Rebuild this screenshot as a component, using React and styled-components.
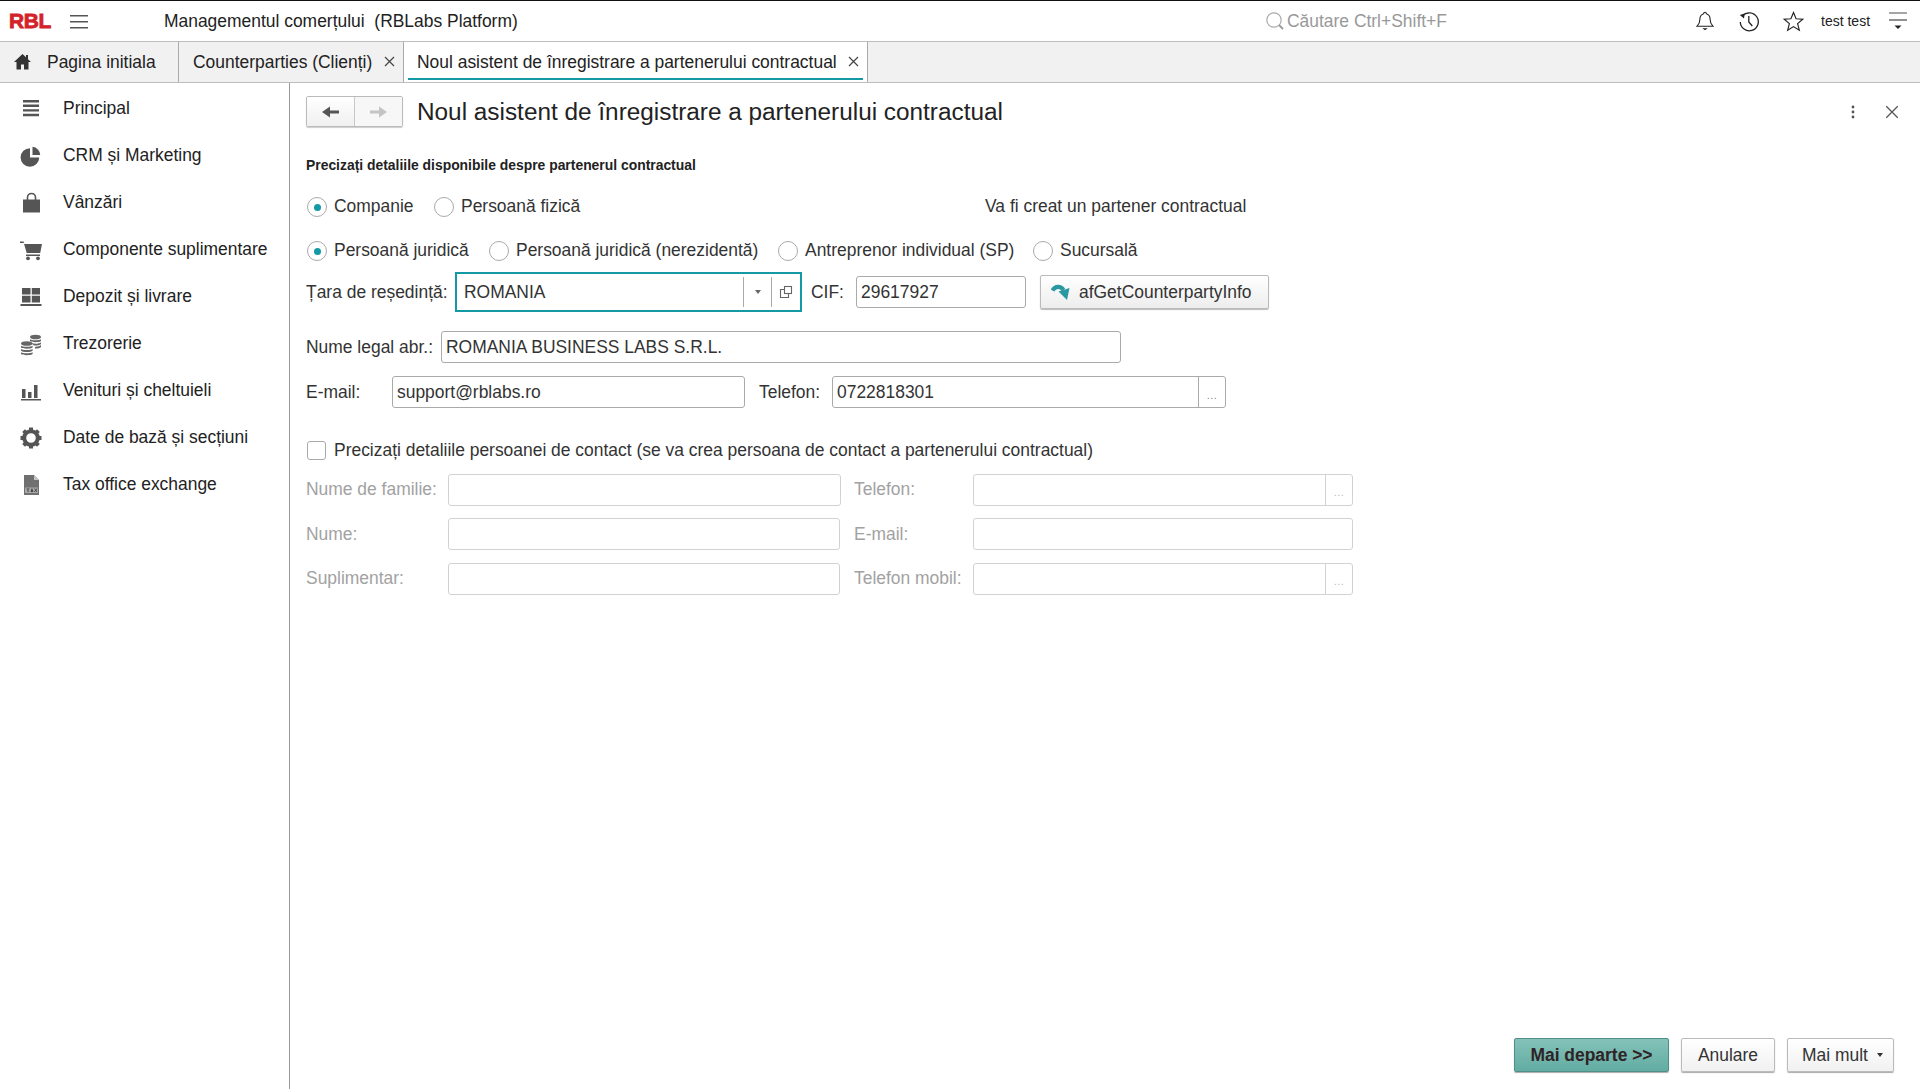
import React from "react"
import styled, { createGlobalStyle } from "styled-components"

const GlobalStyle = createGlobalStyle`
  html, body { margin: 0; padding: 0; height: 100%; background: #fff; }
  body {
    font-family: "Liberation Sans", Arial, sans-serif;
    font-size: 17.45px;
    color: #333;
  }
  * { box-sizing: border-box; }
`

const Page = styled.div`
  width: 1920px;
  height: 1089px;
  display: flex;
  flex-direction: column;
  overflow: hidden;
  border-top: 1px solid #111;
`

// Top bar
const TopBar = styled.header`
  height: 40px;
  flex: none;
  display: flex;
  align-items: center;
  position: relative;
`

const Logo = styled.div`
  width: 70px;
  padding-left: 9px;
  font-size: 21px;
  font-weight: 700;
  letter-spacing: -0.4px;
  color: #d3222a;
  -webkit-text-stroke: 0.8px #d3222a;
`

const Burger = styled.div`
  width: 94px;
  display: flex;
  flex-direction: column;
  gap: 5px;
  span {
    display: block;
    width: 18px;
    height: 1px;
    background: #555;
    box-shadow: 0 1px 0 #aaa;
  }
`

const AppTitle = styled.div`
  white-space: pre;
  color: #222;
`

const Search = styled.div`
  margin-left: auto;
  width: 418px;
  display: flex;
  align-items: center;
  gap: 2px;
  color: #999;
`

const TopIcons = styled.div`
  width: 237px;
  display: flex;
  align-items: center;
  color: #222;
`

const TopIcon = styled.div`
  width: 44px;
  flex: none;
  display: flex;
  justify-content: center;
`

const UserName = styled.div`
  font-size: 14px;
  width: 55px;
  margin-left: 6px;
  white-space: nowrap;
`

// Tabs
const TabBar = styled.nav`
  height: 42px;
  flex: none;
  display: flex;
  background: #f1f1f1;
  border-top: 1px solid #bdbdbd;
  border-bottom: 1px solid #bdbdbd;
`

const Tab = styled.div`
  width: ${p => p.$w}px;
  flex: none;
  display: flex;
  align-items: center;
  position: relative;
  padding-left: ${p => p.$pad}px;
  border-right: 1px solid #aaa;
  color: #222;
  background: ${p => (p.$active ? "#fff" : "transparent")};
  white-space: nowrap;
`

const TabUnderline = styled.div`
  position: absolute;
  left: 4px;
  right: 4px;
  bottom: 2px;
  height: 2px;
  background: #159aa5;
`

const TabClose = styled.span`
  position: absolute;
  right: 8px;
  top: 14px;
  display: flex;
  color: #444;
`

const TabHomeSlot = styled.span`
  position: absolute;
  left: 13px;
  top: 10px;
  display: flex;
  color: #333;
`

const Body = styled.div`
  flex: 1;
  display: flex;
  min-height: 0;
`

// Sidebar
const Sidebar = styled.aside`
  width: 290px;
  flex: none;
  border-right: 1px solid #999;
  padding-top: 2px;
`

const MenuItem = styled.div`
  height: 47px;
  display: flex;
  align-items: center;
  color: #222;
`

const MenuIcon = styled.div`
  width: 63px;
  padding-left: 19px;
  flex: none;
  display: flex;
  color: #555;
`

// Main content
const Main = styled.main`
  flex: 1;
  min-width: 0;
  display: flex;
  flex-direction: column;
  padding: 13px 0 0 16px;
`

const TitleRow = styled.div`
  display: flex;
  align-items: center;
  height: 31px;
  padding-right: 8px;
`

const NavGroup = styled.div`
  display: flex;
  width: 97px;
  height: 31px;
  margin-right: 14px;
  border: 1px solid #bbb;
  border-radius: 2px;
  box-shadow: 0 1px 1px #ccc;
`

const NavButton = styled.div`
  flex: 1;
  display: flex;
  align-items: center;
  justify-content: center;
  background: ${p => (p.$off ? "#f7f7f7" : "linear-gradient(#fff, #f0f0f0)")};
  color: ${p => (p.$off ? "#c4c4c4" : "#555")};
  & + & { border-left: 1px solid #c8c8c8; }
`

const Title = styled.h1`
  margin: 0;
  flex: 1;
  font-size: 24.35px;
  font-weight: 400;
  color: #222;
  white-space: nowrap;
`

const TitleAction = styled.div`
  width: ${p => p.$w}px;
  flex: none;
  display: flex;
  justify-content: center;
  color: #555;
`

const SectionHead = styled.div`
  margin-top: 30px;
  height: 16px;
  line-height: 16px;
  font-size: 13.9px;
  font-weight: 700;
  color: #222;
`

const Row = styled.div`
  display: flex;
  align-items: center;
  height: ${p => p.$h}px;
  margin-top: ${p => p.$mt || 0}px;
`

const RadioOption = styled.div`
  width: ${p => p.$w}px;
  flex: none;
  display: flex;
  align-items: center;
  gap: 7px;
  padding-left: 1px;
  white-space: nowrap;
  color: #333;
`

const RadioMark = styled.span`
  width: 20px;
  height: 20px;
  flex: none;
  margin-top: 2px;
  border: 1px solid #aaa;
  border-radius: 50%;
  background: #fff;
  display: flex;
  align-items: center;
  justify-content: center;
  &::after {
    content: "";
    width: 7px;
    height: 7px;
    border-radius: 50%;
    background: ${p => (p.$on ? "#159aa5" : "transparent")};
  }
`

const Note = styled.div`
  margin-left: ${p => p.$ml}px;
  color: #333;
  white-space: nowrap;
`

const Label = styled.label`
  width: ${p => p.$w}px;
  margin-left: ${p => p.$ml || 0}px;
  flex: none;
  white-space: nowrap;
  color: ${p => (p.$dim ? "#a2a2a2" : "#333")};
`

const Input = styled.div`
  width: ${p => p.$w}px;
  height: 32px;
  flex: none;
  display: flex;
  align-items: center;
  padding-left: 4px;
  border: 1px solid ${p => (p.$dim ? "#d2d2d2" : "#aaa")};
  border-radius: 3px;
  background: #fff;
  color: #333;
  white-space: nowrap;
`

const InputWrap = styled.div`
  width: ${p => p.$w}px;
  height: 32px;
  flex: none;
  display: flex;
  border: 1px solid ${p => (p.$dim ? "#d2d2d2" : "#aaa")};
  border-radius: 3px;
  background: #fff;
`

const InputText = styled.div`
  flex: 1;
  display: flex;
  align-items: center;
  padding-left: 4px;
`

const Dots = styled.div`
  width: 27px;
  flex: none;
  display: flex;
  align-items: center;
  justify-content: center;
  padding-top: 5px;
  font-size: 11px;
  letter-spacing: 0.5px;
  border-left: 1px solid ${p => (p.$dim ? "#d2d2d2" : "#aaa")};
  color: ${p => (p.$dim ? "#bbb" : "#888")};
`

const Select = styled.div`
  width: 347px;
  height: 40px;
  flex: none;
  display: flex;
  align-items: center;
  border: 2px solid #159aa5;
  padding-left: 7px;
  color: #333;
`

const SelectValue = styled.div`
  flex: 1;
`

const SelectPart = styled.div`
  width: ${p => p.$w}px;
  height: 30px;
  flex: none;
  display: flex;
  align-items: center;
  justify-content: center;
  border-left: 1px solid #aaa;
  color: #666;
`

const Caret = styled.span`
  width: 0;
  height: 0;
  border-left: 3.5px solid transparent;
  border-right: 3.5px solid transparent;
  border-top: 4px solid ${p => p.$color || "#666"};
`

const ActionButton = styled.div`
  width: 229px;
  height: 34px;
  flex: none;
  margin-left: 14px;
  display: flex;
  align-items: center;
  gap: 8px;
  padding-left: 10px;
  border: 1px solid #bbb;
  border-radius: 2px;
  background: linear-gradient(#fff, #ededed);
  box-shadow: 0 1px 1px #bbb;
  color: #333;
`

const CheckBox = styled.span`
  width: 19px;
  height: 19px;
  flex: none;
  margin: 1px 8px 0 1px;
  border: 1px solid #aaa;
  border-radius: 3px;
  background: #fff;
`

const ContactGrid = styled.div`
  display: grid;
  grid-template-columns: 142px 392px 14px 119px 380px;
  grid-auto-rows: 32px;
  row-gap: 12.5px;
  align-items: center;
  margin-top: 11.5px;
`

const Footer = styled.div`
  margin-top: auto;
  margin-bottom: 17px;
  padding-right: 26px;
  display: flex;
  justify-content: flex-end;
  gap: 12px;
`

const FooterButton = styled.div`
  width: ${p => p.$w}px;
  height: 34px;
  display: flex;
  align-items: center;
  justify-content: center;
  gap: 9px;
  padding-left: ${p => p.$pad || 0}px;
  border: 1px solid ${p => (p.$primary ? "#4f8f88" : "#bbb")};
  border-radius: 2px;
  background: ${p =>
    p.$primary ? "linear-gradient(#84c2b9, #62aca2)" : "linear-gradient(#fff, #f1f1f1)"};
  box-shadow: 0 1px 1px #aaa;
  color: ${p => (p.$primary ? "#2f2326" : "#333")};
  font-weight: ${p => (p.$primary ? 700 : 400)};
`

// Icons
const Svg = ({ size = 24, w, h, box = "0 0 24 24", children }) => (
  <svg width={w || size} height={h || size} viewBox={box} fill="currentColor">
    {children}
  </svg>
)

const line = { fill: "none", stroke: "currentColor" }

const SearchIcon = () => (
  <Svg size={20} box="0 0 20 20">
    <circle cx="9" cy="9" r="7.2" {...line} stroke="#aaa" strokeWidth="1.2" />
    <path d="M14 14l4 4" {...line} stroke="#999" strokeWidth="1.8" />
  </Svg>
)

const BellIcon = () => (
  <Svg size={22}>
    <path
      d="M12 2.500c-1 0-1.500.8-1.500 1.600C7.600 5 6.400 7.400 6.400 10.400c0 3.800-1.200 5.600-3 7.300h17.200c-1.800-1.700-3-3.500-3-7.300 0-3-1.200-5.400-4.100-6.300 0-.8-.5-1.600-1.500-1.600z"
      {...line}
      strokeWidth="1.2"
    />
    <path d="M9 20h6l-3 2z" />
  </Svg>
)

const HistoryIcon = () => (
  <Svg size={24}>
    <path d="M5.600 6.800A9 9 0 1 1 3.300 13" {...line} strokeWidth="1.3" />
    <path d="M2.800 6l4.800-1.400-.6 5z" />
    <path d="M11.800 7v6l3.500 4" {...line} strokeWidth="1.3" />
  </Svg>
)

const StarIcon = () => (
  <Svg size={23}>
    <path
      d="M12 2.600l2.700 6.600 7 .5-5.400 4.500 1.800 6.900-6.100-3.800-6.100 3.800 1.800-6.900-5.400-4.500 7-.5z"
      {...line}
      strokeWidth="1.2"
    />
  </Svg>
)

const LinesMenuIcon = () => (
  <Svg w={20} h={22} box="0 0 20 22">
    <path d="M1 3h18" {...line} stroke="#888" strokeWidth="1.5" />
    <path d="M1 10h18" {...line} strokeWidth="1" />
    <path d="M6.500 15.500h7L10 19z" />
  </Svg>
)

const HomeIcon = () => (
  <Svg size={19} box="0 0 19 19">
    <path d="M9.500 2L1 10h2.500v7.500h4.500v-5h3v5h4.500V10H18l-3-2.800V3h-2v2.300z" />
  </Svg>
)

const CloseIcon = ({ size = 11, width = 1.2 }) => (
  <Svg size={size} box="0 0 11 11">
    <path d="M1 1l9 9M10 1l-9 9" {...line} strokeWidth={width} />
  </Svg>
)

const ArrowIcon = ({ flip }) => (
  <Svg w={19} h={14} box="0 0 19 14">
    <path d={flip ? "M1 5.500h9V1.500L18 7l-8 5.500v-4H1z" : "M18 5.500H9V1.500L1 7l8 5.500v-4h9z"} />
  </Svg>
)

const KebabIcon = () => (
  <Svg w={4} h={14} box="0 0 4 14">
    <circle cx="2" cy="2" r="1.4" />
    <circle cx="2" cy="7" r="1.4" />
    <circle cx="2" cy="12" r="1.4" />
  </Svg>
)

const OpenIcon = () => (
  <Svg size={14} box="0 0 14 14">
    <rect x="5.500" y="1.500" width="7" height="7" {...line} strokeWidth="1.1" />
    <path d="M5 4.500H1.500v8h8V9" {...line} strokeWidth="1.1" />
  </Svg>
)

// thick curved arrow bending right and down
const RedoIcon = () => (
  <Svg size={20} box="0 0 20 20">
    <path d="M1.500 8.500C4 4 9.500 3.500 12.500 8" fill="none" stroke="#2a98a0" strokeWidth="4.200" />
    <path d="M7.500 9.500L18.500 6l-2.500 12z" fill="#2a98a0" />
  </Svg>
)

const PieIcon = () => (
  <Svg>
    <path d="M11 4.200v9.300h9.200A9.300 9.300 0 1 1 11 4.200z" />
    <path d="M13.500 2.800a8.500 8.500 0 0 1 7.700 8.200h-7.700z" />
  </Svg>
)

const BagIcon = () => (
  <Svg>
    <path d="M4 8.500h17v13H4z" />
    <path d="M8.500 11V6.500a4 4 0 0 1 8 0V11" {...line} strokeWidth="1.6" />
  </Svg>
)

const CartIcon = () => (
  <Svg>
    <path d="M1 3.500h3.500l.8 2.500H23l-1.800 9H7.700L4.800 5H1z" />
    <path d="M7 16.500h14v1.500H7z" />
    <circle cx="9" cy="20.300" r="1.9" />
    <circle cx="19" cy="20.300" r="1.9" />
  </Svg>
)

const PalletIcon = () => (
  <Svg>
    <path d="M3 3h8.500v6.500H3zM12.800 3H21v6.500h-8.200zM3 10.800h8.500v6.700H3zM12.800 10.800H21v6.700h-8.200zM1.500 19h21v2h-21z" />
  </Svg>
)

const CoinsIcon = () => (
  <Svg>
    <g fill="#666">
      <ellipse cx="16.500" cy="5" rx="5.500" ry="2.300" />
      <path d="M11 7.200c1.500 1.400 9.500 1.400 11 0V9c-1.500 1.600-9.500 1.600-11 0zM12 11c2.500 1 8.500 1 10-.8v1.800c-1 1.200-4 1.600-7 1.500zM16 14.800c2.500.2 5-.5 6-1.700v1.800c-1 1-3 1.600-6 1.600z" />
      <ellipse cx="7.800" cy="11.500" rx="5.800" ry="2.300" />
      <path d="M2 13.700c1.500 1.400 10 1.400 11.600 0v1.800c-1.600 1.600-10 1.600-11.600 0zM2 17c1.500 1.400 10 1.400 11.600 0v1.800c-1.600 1.600-10 1.600-11.600 0zM2 20.200c1.500 1.400 10 1.400 11.600 0V22c-1.600 1.600-10 1.600-11.600 0z" />
    </g>
  </Svg>
)

const BarsIcon = () => (
  <Svg>
    <path d="M3 10h3.500v9H3zM9 13h3.500v6H9zM15 6h3.500v13H15zM2 20h20v1.500H2z" />
  </Svg>
)

const GearIcon = () => (
  <Svg>
    <g transform="translate(12 12)">
      <circle r="6.800" fill="none" stroke="currentColor" strokeWidth="4" />
      {[0, 45, 90, 135, 180, 225, 270, 315].map(a => (
        <rect key={a} x="-2" y="-10.500" width="4" height="4" transform={`rotate(${a})`} />
      ))}
    </g>
  </Svg>
)

const TaxIcon = () => (
  <Svg>
    <path d="M5 2h10l5 5v15H5z" fill="#707070" />
    <path d="M15 2v5h5z" fill="#c4c4c4" />
    <path d="M6 14.500h13v5.500H6z" fill="#a8a8a8" />
    <path d="M7.500 15.500h3v.8h-1v2.700h-1v-2.700h-1zM11.500 19l1-3.500h.9l1 3.500h-.9zM15 15.500h1l.8 1.200.8-1.200h1l-1.300 1.700 1.300 1.800h-1l-.8-1.200-.8 1.200h-1l1.300-1.800z" fill="#444" />
  </Svg>
)

const MenuLinesIcon = () => (
  <Svg>
    <path d="M4 3h16v2.400H4zM4 7.600h16V10H4zM4 12.200h16v2.400H4zM4 16.800h16v2.400H4z" />
  </Svg>
)

const menu = [
  ["Principal", MenuLinesIcon],
  ["CRM și Marketing", PieIcon],
  ["Vânzări", BagIcon],
  ["Componente suplimentare", CartIcon],
  ["Depozit și livrare", PalletIcon],
  ["Trezorerie", CoinsIcon],
  ["Venituri și cheltuieli", BarsIcon],
  ["Date de bază și secțiuni", GearIcon],
  ["Tax office exchange", TaxIcon],
]

const App = () => (
  <Page>
    <GlobalStyle />
    <TopBar>
      <Logo>RBL</Logo>
      <Burger>
        <span />
        <span />
        <span />
      </Burger>
      <AppTitle>Managementul comerțului  (RBLabs Platform)</AppTitle>
      <Search>
        <SearchIcon />
        Căutare Ctrl+Shift+F
      </Search>
      <TopIcons>
        <TopIcon>
          <BellIcon />
        </TopIcon>
        <TopIcon>
          <HistoryIcon />
        </TopIcon>
        <TopIcon>
          <StarIcon />
        </TopIcon>
        <UserName>test test</UserName>
        <TopIcon>
          <LinesMenuIcon />
        </TopIcon>
      </TopIcons>
    </TopBar>

    <TabBar>
      <Tab $w={179} $pad={47}>
        <TabHomeSlot>
          <HomeIcon />
        </TabHomeSlot>
        Pagina initiala
      </Tab>
      <Tab $w={225} $pad={14}>
        Counterparties (Clienți)
        <TabClose>
          <CloseIcon />
        </TabClose>
      </Tab>
      <Tab $w={464} $pad={13} $active>
        Noul asistent de înregistrare a partenerului contractual
        <TabClose>
          <CloseIcon />
        </TabClose>
        <TabUnderline />
      </Tab>
    </TabBar>

    <Body>
      <Sidebar>
        {menu.map(([label, Icon]) => (
          <MenuItem key={label}>
            <MenuIcon>
              <Icon />
            </MenuIcon>
            {label}
          </MenuItem>
        ))}
      </Sidebar>

      <Main>
        <TitleRow>
          <NavGroup>
            <NavButton>
              <ArrowIcon />
            </NavButton>
            <NavButton $off>
              <ArrowIcon flip />
            </NavButton>
          </NavGroup>
          <Title>Noul asistent de înregistrare a partenerului contractual</Title>
          <TitleAction $w={38}>
            <KebabIcon />
          </TitleAction>
          <TitleAction $w={40}>
            <CloseIcon size={14} width={1} />
          </TitleAction>
        </TitleRow>

        <SectionHead>Precizați detaliile disponibile despre partenerul contractual</SectionHead>

        <Row $h={24} $mt={21}>
          <RadioOption $w={127}>
            <RadioMark $on />
            Companie
          </RadioOption>
          <RadioOption $w={200}>
            <RadioMark />
            Persoană fizică
          </RadioOption>
          <Note $ml={352}>Va fi creat un partener contractual</Note>
        </Row>

        <Row $h={24} $mt={20}>
          <RadioOption $w={182}>
            <RadioMark $on />
            Persoană juridică
          </RadioOption>
          <RadioOption $w={289}>
            <RadioMark />
            Persoană juridică (nerezidentă)
          </RadioOption>
          <RadioOption $w={255}>
            <RadioMark />
            Antreprenor individual (SP)
          </RadioOption>
          <RadioOption $w={150}>
            <RadioMark />
            Sucursală
          </RadioOption>
        </Row>

        <Row $h={40} $mt={10}>
          <Label $w={149}>Țara de reședință:</Label>
          <Select>
            <SelectValue>ROMANIA</SelectValue>
            <SelectPart $w={28}>
              <Caret />
            </SelectPart>
            <SelectPart $w={29}>
              <OpenIcon />
            </SelectPart>
          </Select>
          <Label $w={45} $ml={9}>CIF:</Label>
          <Input $w={170}>29617927</Input>
          <ActionButton>
            <RedoIcon />
            afGetCounterpartyInfo
          </ActionButton>
        </Row>

        <Row $h={32} $mt={19}>
          <Label $w={135}>Nume legal abr.:</Label>
          <Input $w={680}>ROMANIA BUSINESS LABS S.R.L.</Input>
        </Row>

        <Row $h={32} $mt={13}>
          <Label $w={86}>E-mail:</Label>
          <Input $w={353}>support@rblabs.ro</Input>
          <Label $w={73} $ml={14}>Telefon:</Label>
          <InputWrap $w={394}>
            <InputText>0722818301</InputText>
            <Dots>...</Dots>
          </InputWrap>
        </Row>

        <Row $h={24} $mt={30}>
          <CheckBox />
          Precizați detaliile persoanei de contact (se va crea persoana de contact a partenerului contractual)
        </Row>

        <ContactGrid>
          <Label $dim>Nume de familie:</Label>
          <Input $dim $w={393} />
          <span />
          <Label $dim>Telefon:</Label>
          <InputWrap $dim $w={380}>
            <InputText />
            <Dots $dim>...</Dots>
          </InputWrap>

          <Label $dim>Nume:</Label>
          <Input $dim $w={392} />
          <span />
          <Label $dim>E-mail:</Label>
          <Input $dim $w={380} />

          <Label $dim>Suplimentar:</Label>
          <Input $dim $w={392} />
          <span />
          <Label $dim>Telefon mobil:</Label>
          <InputWrap $dim $w={380}>
            <InputText />
            <Dots $dim>...</Dots>
          </InputWrap>
        </ContactGrid>

        <Footer>
          <FooterButton $primary $w={155}>Mai departe &gt;&gt;</FooterButton>
          <FooterButton $w={94}>Anulare</FooterButton>
          <FooterButton $w={107} $pad={4}>
            Mai mult
            <Caret $color="#333" />
          </FooterButton>
        </Footer>
      </Main>
    </Body>
  </Page>
)

export default App
